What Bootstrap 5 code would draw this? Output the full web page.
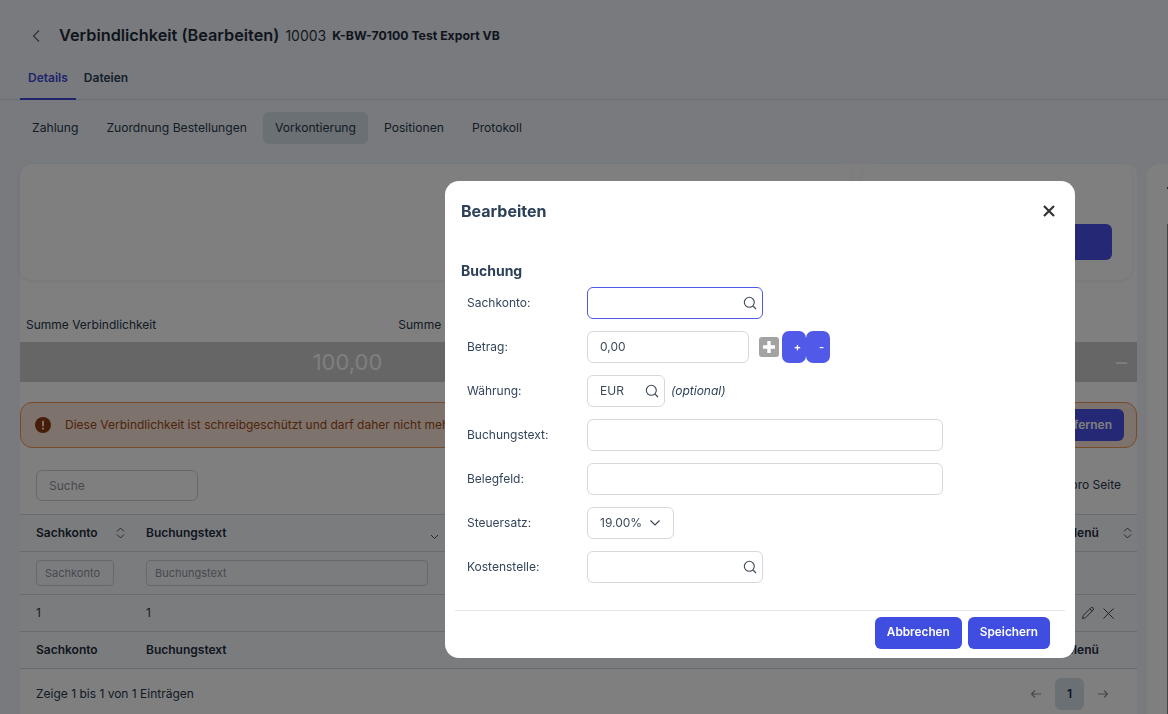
<!DOCTYPE html>
<html lang="de">
<head>
  <meta charset="UTF-8" />
  <meta name="viewport" content="width=device-width, initial-scale=1.0"/>
  <title>Verbindlichkeit (Bearbeiten)</title>
  <link href="https://cdn.jsdelivr.net/npm/bootstrap@5.3.6/dist/css/bootstrap.min.css" rel="stylesheet"/>
  <style>
    html, body { height: 100%; overflow: hidden; }
    body {
      background: #f0f5fb;
      font-family: Inter, "Liberation Sans", sans-serif;
      font-size: 12px;
      color: #26364a;
    }
    .page-head { height: 72px; padding: 0 0 0 30px; gap: 15px; }
    .page-title { font-size: 16.3px; font-weight: 600; color: #1f2a3a; margin: 0 0 0 2px; }
    .page-num { font-size: 14px; margin: -2px 0 0 -9px; color: #2b3544; }
    .page-sub { font-size: 12.25px; font-weight: 700; color: #1f2a3a; margin-left: -9px; }
    .main-tabs { height: 28px; padding-left: 20px; border-bottom: 1px solid #d7dde4; }
    .main-tabs a { padding: 0 8px; height: 28px; line-height: 11px; font-weight: 600; color: #2c4058; text-decoration: none; font-size: 12px; display: block; }
    .main-tabs a.active { color: #4049d8; border-bottom: 2px solid #4049d8; }
    .sub-tabs { padding: 12px 0 0 20px; height: 64px; }
    .sub-tabs a { padding: 0 12px; height: 32px; line-height: 32px; color: #2b3a4c; text-decoration: none; border-radius: 6px; margin-right: 4px; font-size: 12.15px; white-space: nowrap; }
    .sub-tabs a.active { background: #d5e0e9; }
    .cards-wrap { padding-left: 20px; gap: 10px; }
    .main-card { flex: 0 0 1117px; background: #fff; border-radius: 12px 12px 0 0; height: 560px; }
    .side-card { flex: 0 0 60px; background: #fff; border-radius: 12px 0 0 0; height: 560px; padding: 23px 0 0 20px; }
    .side-dash { width: 2px; height: 2px; background: #555; }
    .side-line { width: 2px; height: 500px; background: #888; margin-top: 35px; }
    .top-panels { height: 116px; gap: 10px; }
    .top-panel-a { width: 832px; border-radius: 12px; box-shadow: 0 1px 4px rgba(0,0,0,.08); }
    .top-panel-b { width: 270px; border-radius: 12px; box-shadow: 0 1px 4px rgba(0,0,0,.08); padding: 60px 20px 0 0; }
    .blue-block { width: 110px; height: 36px; background: #4a50e8; border-radius: 6px; }
    .sum-label { height: 62px; padding-top: 36px; }
    .sum-label > div { padding-left: 6px; }
    .sum-bar { background: #ccc; height: 40px; color: #fff; font-size: 22px; line-height: 40px; }
    .sum-bar > div { text-align: right; padding-right: 10px; }
    .warn-box { margin-top: 20px; height: 46px; border: 1px solid #ea9a55; background: #fce4d8; border-radius: 12px; padding: 0 12px 0 14px; color: #9c4a16; gap: 14px; }
    .warn-btn { height: 32px; line-height: 32px; padding: 0 12px; background: #4a50e8; border-radius: 6px; color: #fff; font-weight: 600; }
    .search-row { height: 66px; padding: 8px 16px 0; }
    .search-box { width: 162px; height: 31px; border: 1px solid #ccd1d7; border-radius: 6px; padding: 0 12px; font-size: 12px; background: transparent; }
    .search-box::placeholder, .filter-box::placeholder { color: #8d959e; opacity: 1; }
    .data-table { table-layout: fixed; width: 1117px; border-collapse: collapse; background: #f6f9fc; }
    .data-table th, .data-table td { border-top: 1px solid #d2d6db; border-bottom: 1px solid #d2d6db; padding: 0 5px 0 16px; height: 37px; vertical-align: middle; }
    .data-table th { font-weight: 600; color: #1f2d40; }
    .data-table .cell-narrow { padding-right: 1px; }
    .data-table .cell-acct { padding-right: 16px; }
    .data-table .cell-text { padding-right: 12px; }
    .data-table .cell-tools { padding-right: 23px; }
    .filter-row td { height: 43px; }
    .filter-box { height: 26px; width: 100%; border: 1px solid #ccd1d7; border-radius: 4px; padding: 0 8px; font-size: 11px; background: transparent; }
    .row-tools { gap: 8px; }
    .table-foot { height: 50px; padding: 0 28px 0 16px; }
    .page-arrow { color: #8b939b; }
    .page-num-btn { width: 29px; height: 32px; line-height: 32px; margin: 0 13px; text-align: center; background: #d5e0e9; border-radius: 6px; font-weight: 600; color: #1f2d40; }

    .edit-dialog { width: 630px; max-width: 630px; margin: 181px 0 0 445px; }
    .edit-content { height: 477px; border: 0; border-radius: 14px; color: #2c4058; }
    .edit-head { height: 60px; padding: 0 19px 0 16px; }
    .edit-title { font-size: 16px; font-weight: 700; margin: 2px 0 0; color: #2c4058; }
    .close-x { background: none; border: 0; padding: 0; line-height: 0; color: #333; }
    .edit-body { padding: 20px 16px 0; }
    .section-title { font-size: 14px; font-weight: 700; height: 20px; line-height: 20px; margin-bottom: 6px; }
    .form-line { height: 32px; margin-bottom: 12px; padding-left: 6px; }
    .form-line label { width: 120px; font-size: 12px; margin: 0; color: #33455a; }
    .field-box { height: 32px; border: 1px solid #d6d8db; border-radius: 6px; padding: 0 12px; font-size: 12px; color: #3c4a5a; background: #fff; gap: 6px; }
    .field-box.focused { border-color: #4f5be8; }
    .w-acct { width: 176px; padding-right: 5px; }
    .w-amount { width: 162px; }
    .w-curr { width: 78px; padding-right: 5px; }
    .w-wide { width: 356px; }
    .w-tax { width: 87px; }
    .opt-note { font-style: italic; margin-left: 6px; font-size: 12px; }
    .add-icon { margin: 0 3px 0 10px; }
    .mini-btn { width: 24px; height: 32px; background: #5059e8; border-radius: 7px; color: #fff; font-size: 11px; font-weight: 600; border: 0; padding: 0 0 0 7px; }
    .edit-foot { margin: 0 10px; height: 48px; border-top: 1px solid #e3e6ea; padding: 6px 15px 0 0; gap: 6px; position: absolute; left: 0; right: 0; bottom: 0; }
    .save-btn { height: 32px; padding: 0 12px; background: #3f4de0; border: 0; border-radius: 6px; color: #fff; font-size: 11.8px; font-weight: 600; }
  </style>
</head>
<body>

<div class="d-flex align-items-center page-head">
  <svg width="12" height="14" viewBox="0 0 12 14" fill="none" stroke="#5c6670" stroke-width="1.2"><path d="M9 1.5 3.5 7 9 12.5"/></svg>
  <h1 class="page-title">Verbindlichkeit (Bearbeiten)</h1>
  <span class="page-num">10003</span>
  <span class="page-sub">K-BW-70100 Test Export VB</span>
</div>

<div class="d-flex main-tabs">
  <a class="active" href="#">Details</a>
  <a href="#">Dateien</a>
</div>

<div class="d-flex sub-tabs">
  <a href="#">Zahlung</a>
  <a href="#">Zuordnung Bestellungen</a>
  <a class="active" href="#">Vorkontierung</a>
  <a href="#">Positionen</a>
  <a href="#">Protokoll</a>
</div>

<div class="d-flex cards-wrap">
  <div class="main-card">
    <div class="top-panels d-flex">
      <div class="top-panel-a"></div>
      <div class="top-panel-b d-flex justify-content-end">
        <div class="blue-block"></div>
      </div>
    </div>
    <div class="row g-0 sum-label">
      <div class="col-4">Summe Verbindlichkeit</div>
      <div class="col-4">Summe</div>
    </div>
    <div class="row g-0 sum-bar">
      <div class="col-4">100,00</div>
      <div class="col-4"></div>
      <div class="col-4">–</div>
    </div>
    <div class="warn-box d-flex align-items-center">
      <svg width="16" height="16" viewBox="0 0 16 16"><circle cx="8" cy="8" r="8" fill="#8a3b12"/><rect x="7" y="3.5" width="2" height="6" rx="1" fill="#fce4d8"/><circle cx="8" cy="11.7" r="1.1" fill="#fce4d8"/></svg>
      <span>Diese Verbindlichkeit ist schreibgeschützt und darf daher nicht mehr bearbeitet werden.</span>
      <span class="warn-btn ms-auto">Entfernen</span>
    </div>
    <div class="search-row d-flex align-items-center justify-content-between">
      <input class="search-box" type="text" placeholder="Suche">
      <span>Einträge pro Seite</span>
    </div>
    <table class="data-table">
      <colgroup><col style="width:110px"><col style="width:310px"><col><col style="width:87px"></colgroup>
      <tr>
        <th><div class="d-flex justify-content-between align-items-center">Sachkonto
          <svg width="9" height="12" viewBox="0 0 9 12" fill="none" stroke="#4a5560"><path d="M1 4.5 4.5 1 8 4.5M1 7.5 4.5 11 8 7.5"/></svg></div></th>
        <th class="cell-narrow"><div class="d-flex justify-content-between align-items-center">Buchungstext
          <svg width="9" height="6" viewBox="0 0 9 6" fill="none" stroke="#4a5560" class="mt-2"><path d="M1 1 4.5 4.5 8 1"/></svg></div></th>
        <th></th>
        <th><div class="d-flex justify-content-between align-items-center">Menü
          <svg width="9" height="12" viewBox="0 0 9 12" fill="none" stroke="#4a5560"><path d="M1 4.5 4.5 1 8 4.5M1 7.5 4.5 11 8 7.5"/></svg></div></th>
      </tr>
      <tr class="filter-row">
        <td class="cell-acct"><input class="filter-box" type="text" placeholder="Sachkonto"></td>
        <td class="cell-text"><input class="filter-box" type="text" placeholder="Buchungstext"></td>
        <td></td>
        <td></td>
      </tr>
      <tr>
        <td>1</td>
        <td>1</td>
        <td></td>
        <td class="cell-tools">
          <div class="d-flex justify-content-end align-items-center row-tools">
            <svg width="14" height="14" viewBox="0 0 15 15" fill="none" stroke="#3d4853"><path d="M1.5 13.5 2.5 10 10.5 2a1.6 1.6 0 0 1 2.4 2.4L5 12.5ZM9.5 3l2.5 2.5"/></svg>
            <svg width="11" height="11" viewBox="0 0 11 11" fill="none" stroke="#3d4853"><path d="M.5.5 10.5 10.5M10.5.5 .5 10.5"/></svg>
          </div>
        </td>
      </tr>
      <tr>
        <th>Sachkonto</th>
        <th>Buchungstext</th>
        <th></th>
        <th>Menü</th>
      </tr>
    </table>
    <div class="table-foot d-flex align-items-center justify-content-between">
      <span>Zeige 1 bis 1 von 1 Einträgen</span>
      <div class="d-flex align-items-center">
        <svg class="page-arrow" width="12" height="10" viewBox="0 0 12 10" fill="none" stroke="currentColor" stroke-width="1.2"><path d="M11 5H1.5M5 1.5 1.5 5 5 8.5"/></svg>
        <span class="page-num-btn">1</span>
        <svg class="page-arrow" width="12" height="10" viewBox="0 0 12 10" fill="none" stroke="currentColor" stroke-width="1.2"><path d="M1 5h9.5M7 1.5 10.5 5 7 8.5"/></svg>
      </div>
    </div>
  </div>
  <div class="side-card">
    <div class="side-dash"></div>
    <div class="side-line"></div>
  </div>
</div>

<div class="modal-backdrop show"></div>
<div class="modal d-block" tabindex="-1">
  <div class="modal-dialog edit-dialog">
    <div class="modal-content edit-content">
      <div class="d-flex align-items-center justify-content-between edit-head">
        <h5 class="edit-title">Bearbeiten</h5>
        <button class="close-x" type="button" aria-label="Schließen">
          <svg width="14" height="14" viewBox="0 0 14 14" fill="none" stroke="#333" stroke-width="2.2"><path d="M2 2 12 12M12 2 2 12"/></svg>
        </button>
      </div>
      <div class="edit-body">
        <div class="section-title">Buchung</div>

        <div class="d-flex align-items-center form-line">
          <label>Sachkonto:</label>
          <div class="field-box focused w-acct d-flex align-items-center justify-content-end">
            <svg width="14" height="14" viewBox="0 0 14 14" fill="none" stroke="#3a4654" stroke-width="1.1"><circle cx="6.3" cy="6.3" r="5"/><path d="M10 10 13 13"/></svg>
          </div>
        </div>

        <div class="d-flex align-items-center form-line">
          <label>Betrag:</label>
          <div class="field-box w-amount d-flex align-items-center">0,00</div>
          <svg class="add-icon" width="20" height="20" viewBox="0 0 20 20"><rect width="20" height="20" rx="3" fill="#a3a3a3"/><path d="M10 4v12M4 10h12" stroke="#fff" stroke-width="3.4"/></svg>
          <button class="mini-btn" type="button">+</button>
          <button class="mini-btn" type="button">-</button>
        </div>

        <div class="d-flex align-items-center form-line">
          <label>Währung:</label>
          <div class="field-box w-curr d-flex align-items-center justify-content-between">EUR
            <svg width="14" height="14" viewBox="0 0 14 14" fill="none" stroke="#3a4654" stroke-width="1.1"><circle cx="6.3" cy="6.3" r="5"/><path d="M10 10 13 13"/></svg>
          </div>
          <span class="opt-note">(optional)</span>
        </div>

        <div class="d-flex align-items-center form-line">
          <label>Buchungstext:</label>
          <div class="field-box w-wide"></div>
        </div>

        <div class="d-flex align-items-center form-line">
          <label>Belegfeld:</label>
          <div class="field-box w-wide"></div>
        </div>

        <div class="d-flex align-items-center form-line">
          <label>Steuersatz:</label>
          <div class="field-box w-tax d-flex align-items-center justify-content-between">19.00%
            <svg width="12" height="8" viewBox="0 0 12 8" fill="none" stroke="#3a4654" stroke-width="1.2"><path d="M1.5 1.5 6 6l4.5-4.5"/></svg>
          </div>
        </div>

        <div class="d-flex align-items-center form-line">
          <label>Kostenstelle:</label>
          <div class="field-box w-acct d-flex align-items-center justify-content-end">
            <svg width="14" height="14" viewBox="0 0 14 14" fill="none" stroke="#3a4654" stroke-width="1.1"><circle cx="6.3" cy="6.3" r="5"/><path d="M10 10 13 13"/></svg>
          </div>
        </div>
      </div>
      <div class="edit-foot d-flex justify-content-end align-items-start">
        <button class="save-btn" type="button">Abbrechen</button>
        <button class="save-btn" type="button">Speichern</button>
      </div>
    </div>
  </div>
</div>

<script src="https://cdn.jsdelivr.net/npm/bootstrap@5.3.6/dist/js/bootstrap.bundle.min.js"></script>
</body>
</html>
